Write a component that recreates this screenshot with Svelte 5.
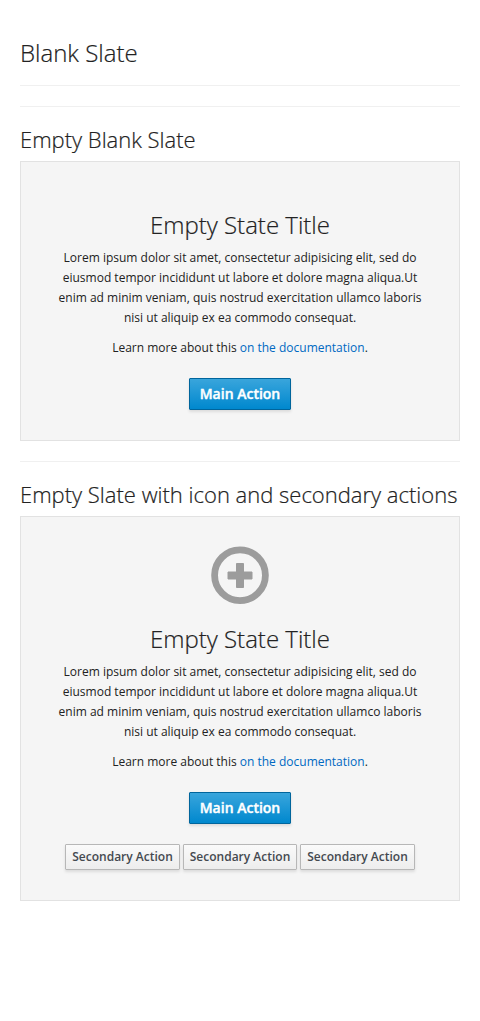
<script>
  const secondary = ['Secondary Action', 'Secondary Action', 'Secondary Action'];
</script>

{#snippet body()}
  <h1 class="title">Empty State Title</h1>
  <p>Lorem ipsum dolor sit amet, consectetur adipisicing elit, sed do eiusmod tempor incididunt ut labore et dolore magna aliqua.Ut enim ad minim veniam, quis nostrud exercitation ullamco laboris nisi ut aliquip ex ea commodo consequat.</p>
  <p>Learn more about this <a href="#docs">on the documentation</a>.</p>
  <div class="main-action"><button class="btn primary">Main Action</button></div>
{/snippet}

<main>
  <h1>Blank Slate</h1>
  <hr class="first" />
  <hr />
  <h2>Empty Blank Slate</h2>
  <section class="slate">
    {@render body()}
  </section>
  <hr />
  <h2>Empty Slate with icon and secondary actions</h2>
  <section class="slate with-icon">
    <svg class="icon" viewBox="0 0 58 58" width="58" height="58">
      <circle cx="29" cy="29.2" r="25.4" fill="none" stroke="#9c9c9c" stroke-width="6.8" />
      <path d="M25.5 17.5h7v8.5h8.5v7h-8.5v8.5h-7v-8.5h-8.5v-7h8.5z" fill="#9c9c9c" stroke="#9c9c9c" stroke-linejoin="round" />
    </svg>
    {@render body()}
    <div class="secondary-actions">
      {#each secondary as label}
        <button class="btn">{label}</button>
      {/each}
    </div>
  </section>
</main>

<style>
  :global(body) {
    margin: 0;
    background: #fff;
    color: #222;
    font-family: "Open Sans", sans-serif;
    font-size: 12px;
    line-height: 20px;
  }
  main { padding: 40px 20px 0; }
  h1, h2 { margin: 0; font-weight: 300; white-space: nowrap; -webkit-text-stroke: 0.2px #222; }
  h1 { font-size: 24px; line-height: 26px; }
  h2 { font-size: 22px; line-height: 24px; margin-bottom: 10px; }
  hr { margin: 20px 0; border: 0; border-top: 1px solid #f0f0f0; }
  hr.first { margin-top: 19px; }
  .slate {
    box-sizing: border-box;
    height: 280px;
    padding: 50px 30px 0;
    border: 1px solid #e2e2e2;
    background: #f5f5f5;
    text-align: center;
  }
  .with-icon { height: 385px; padding-top: 29px; }
  .icon { display: block; margin: 0 auto 22px; }
  .title { margin-bottom: 10px; }
  p { margin: 0 0 10px; }
  a { color: #0069c2; text-decoration: none; }
  .main-action { margin-top: 20px; height: 32px; }
  .btn {
    box-sizing: border-box;
    height: 26px;
    padding: 0 6px;
    border: 1px solid #b7b7b7;
    border-radius: 1px;
    background: linear-gradient(#fafafa, #ededed);
    box-shadow: 0 2px 3px rgba(0, 0, 0, 0.1);
    color: #44494f;
    font: 600 12px/22px "Open Sans", sans-serif;
  }
  .primary {
    height: 32px;
    padding: 0 10px;
    border-color: #00659c;
    background: linear-gradient(#39a5dc, #0088ce);
    color: #fff;
    font-size: 14px;
    line-height: 28px;
    -webkit-text-stroke: 0.4px #fff;
  }
  .secondary-actions { display: flex; justify-content: center; gap: 3px; margin-top: 20px; }
</style>
